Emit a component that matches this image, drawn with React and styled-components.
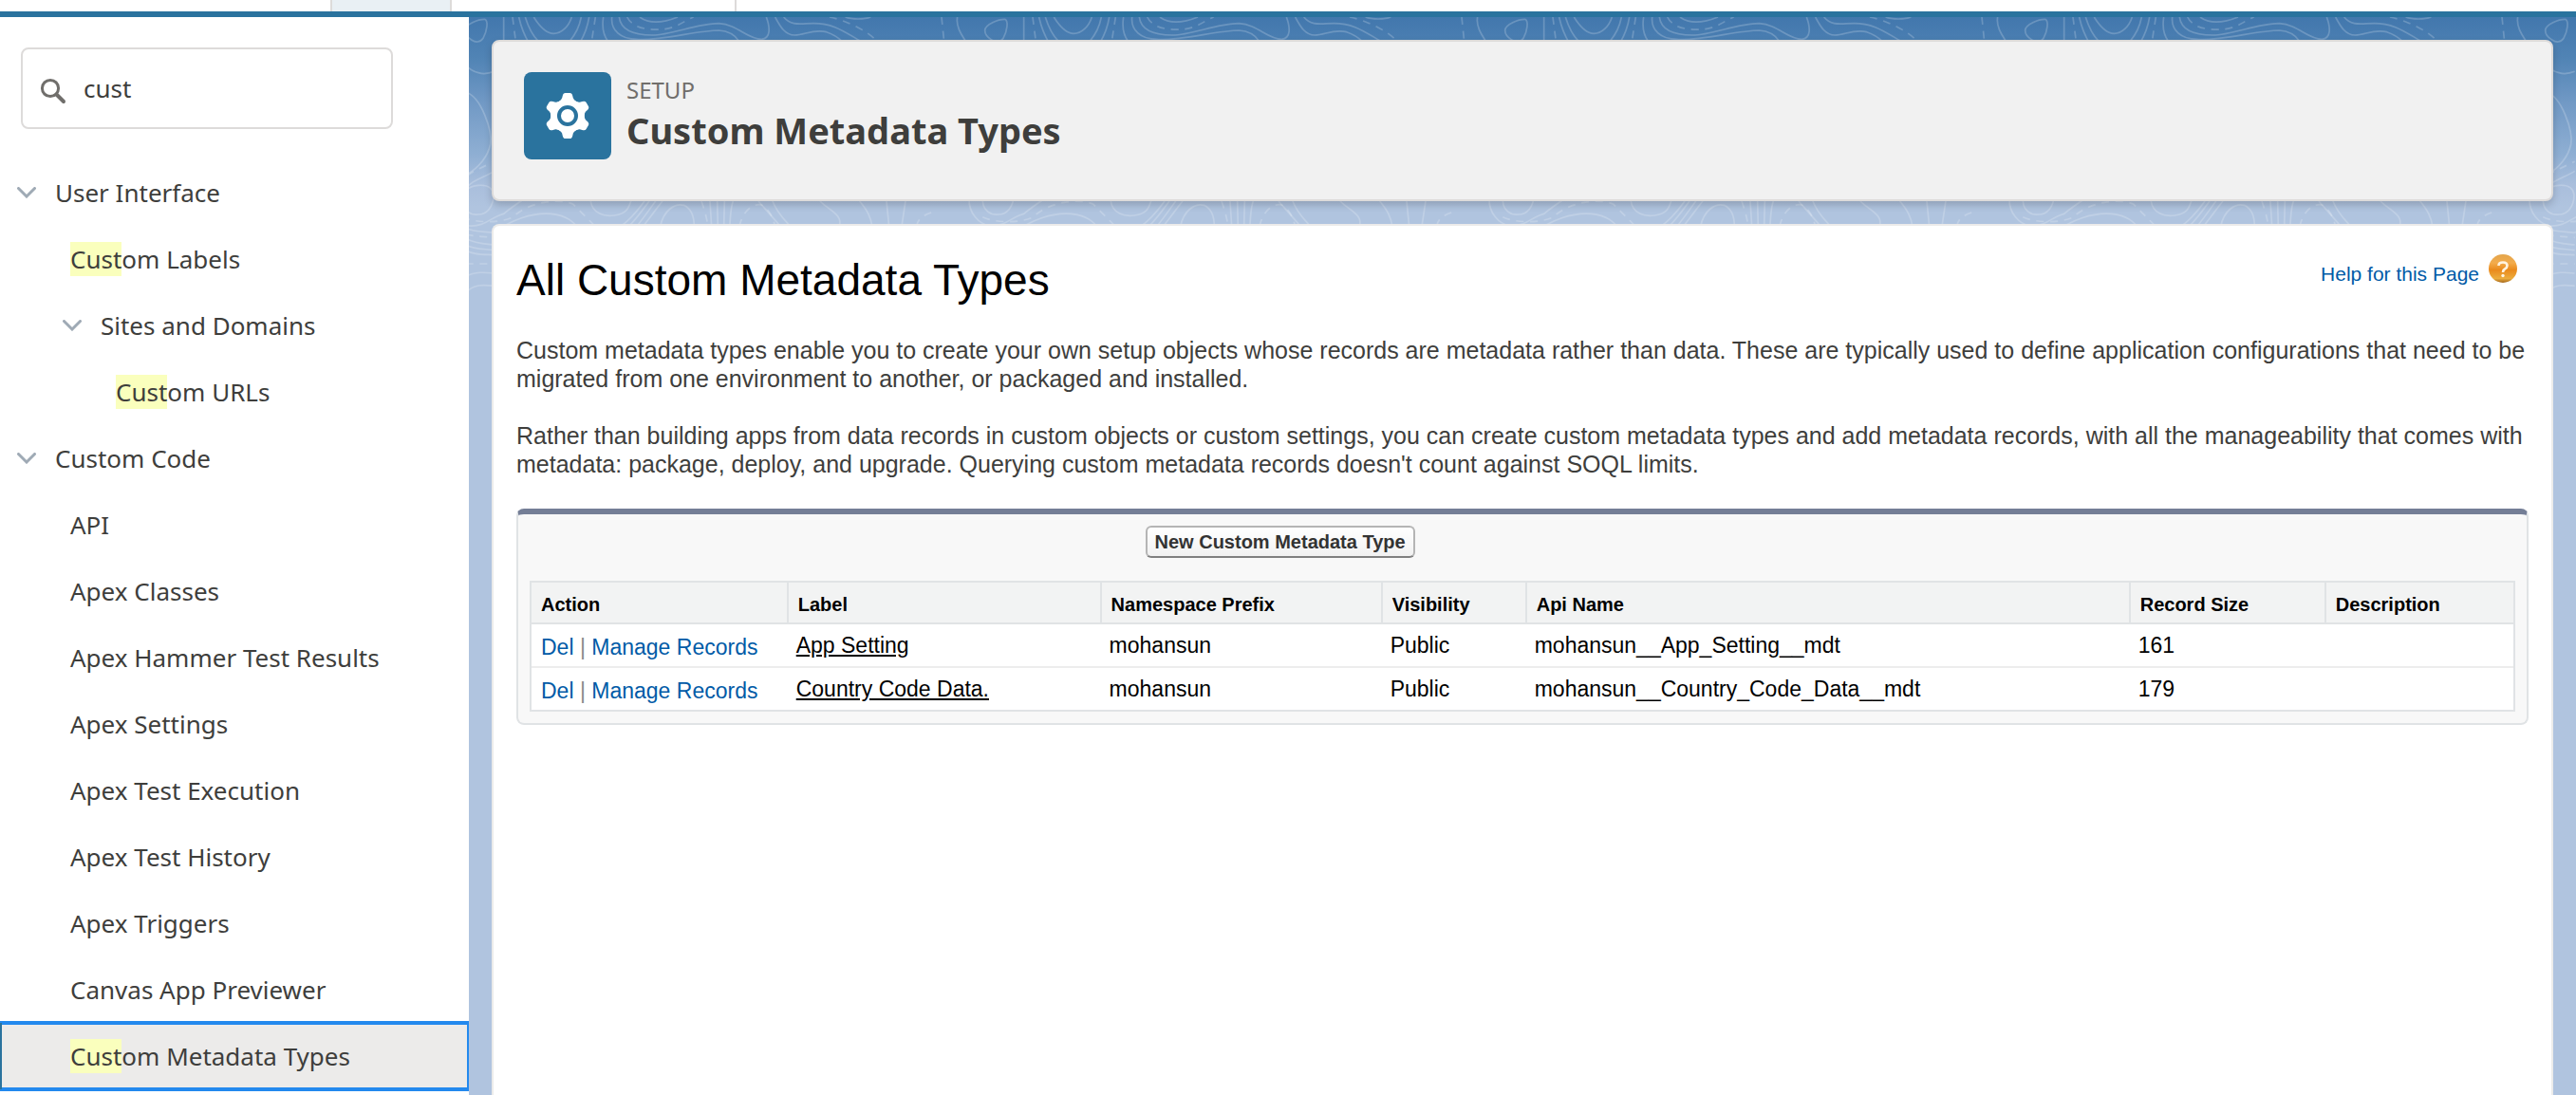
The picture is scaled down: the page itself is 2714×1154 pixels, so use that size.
import React from "react";
import styled, { createGlobalStyle } from "styled-components";

const sans = `"Noto Sans", "Open Sans", sans-serif`;
const arial = `"Liberation Sans", Arial, sans-serif`;

const GlobalStyle = createGlobalStyle`
  *, *::before, *::after { box-sizing: border-box; }
  body { margin: 0; background: #fff; color: #3e3e3c; font-family: ${sans}; }
  h1, h2, p, ul { margin: 0; padding: 0; }
`;

const Page = styled.div`
  display: flex;
  flex-direction: column;
  height: 100vh;
  overflow: hidden;
`;

const TabBar = styled.nav`
  display: flex;
  flex: none;
  height: 18px;
  padding-left: 348px;
  background: #fff;
  border-bottom: 6px solid #2a739e;
`;

const Tab = styled.span`
  width: ${(p) => p.$width}px;
  border-right: 2px solid #dddbda;
  border-left: ${(p) => (p.$active ? "2px solid #dddbda" : "none")};
  background: ${(p) => (p.$active ? "#e9f0f4" : "#fff")};
`;

const Body = styled.div`
  display: flex;
  flex: 1;
  min-height: 0;
`;

const Sidebar = styled.aside`
  flex: none;
  width: 494px;
  padding-top: 32px;
  overflow: hidden;
  background: #fff;
`;

const SearchBox = styled.label`
  display: flex;
  align-items: center;
  gap: 18px;
  height: 86px;
  margin: 0 80px 32px 22px;
  padding-left: 18px;
  border: 2px solid #dddbda;
  border-radius: 8px;
  background: #fff;
`;

const SearchInput = styled.input`
  flex: 1;
  min-width: 0;
  padding: 0;
  border: 0;
  outline: 0;
  background: transparent;
  color: #3e3e3c;
  font: 26px/36px ${sans};
`;

const Tree = styled.ul`
  list-style: none;
`;

const TreeItem = styled.li`
  display: flex;
  align-items: center;
  height: 70px;
  padding-left: ${(p) => p.$indent}px;
  ${(p) =>
    p.$selected &&
    `
    position: relative;
    background: #ecebea;
    border-left: 2px solid #2a739e;
    padding-left: ${p.$indent - 2}px;
    box-shadow: 0 0 0 2px #2389ee, inset 0 2px #2389ee, inset 0 -2px #2389ee, inset -2px 0 #2389ee;
  `}
`;

const Toggle = styled.button`
  display: flex;
  flex: none;
  width: 40px;
  padding: 0;
  border: 0;
  background: none;
`;

const TreeLink = styled.a`
  color: #3e3e3c;
  font-size: 26px;
  line-height: 36px;
  text-decoration: none;
  white-space: nowrap;
`;

const Match = styled.mark`
  background: #faffbd;
  color: inherit;
`;

const Main = styled.main`
  position: relative;
  display: flex;
  flex: 1;
  flex-direction: column;
  gap: 24px;
  min-width: 0;
  padding: 24px 24px 0;
  background: linear-gradient(#4277ad 0, #5184b5 44px, #7199c5 90px, #8fafd3 145px, #a9bedc 176px, #b0c4df 200px);
`;

const Contours = styled.svg`
  position: absolute;
  inset: 0;
  width: 100%;
  height: 320px;
`;

const PageHeader = styled.header`
  position: relative;
  display: flex;
  gap: 16px;
  padding: 32px 32px 42px;
  border: 2px solid #dddbda;
  border-radius: 8px;
  background: #f1f1f1;
  box-shadow: 0 4px 8px rgba(0, 0, 0, 0.18);
`;

const IconTile = styled.span`
  display: flex;
  width: 92px;
  height: 92px;
  border-radius: 8px;
  background: #2a739e;
`;

const HeaderText = styled.div`
  display: flex;
  flex-direction: column;
`;

const Eyebrow = styled.span`
  color: #706e6b;
  font-size: 24px;
  line-height: 38px;
`;

const PageTitle = styled.h1`
  color: #3e3e3c;
  font-size: 38px;
  font-weight: 700;
  line-height: 46px;
`;

const Card = styled.section`
  position: relative;
  flex: 1;
  padding: 30px 24px;
  border: 2px solid #ecebea;
  border-bottom: 0;
  border-radius: 8px 8px 0 0;
  background: #fff;
  font-family: ${arial};
`;

const CardHead = styled.div`
  display: flex;
  justify-content: space-between;
  align-items: flex-start;
  margin-bottom: 32px;
  padding-right: 12px;
`;

const CardTitle = styled.h2`
  color: #000;
  font-size: 46px;
  font-weight: 400;
  line-height: 54px;
`;

const HelpLink = styled.a`
  display: flex;
  align-items: flex-start;
  gap: 10px;
  color: #015ba7;
  font-size: 21px;
  line-height: 42px;
  text-decoration: none;
`;

const Paragraph = styled.p`
  margin-bottom: 30px;
  font-size: 25px;
  line-height: 30px;
`;

const Panel = styled.div`
  margin-top: 32px;
  padding: 12px;
  border: 2px solid #e0e3e5;
  border-top: 6px solid #747e96;
  border-radius: 8px;
  background: #f8f8f8;
`;

const PanelActions = styled.div`
  padding: 0 0 24px 31%;
`;

const ActionButton = styled.button`
  display: block;
  height: 34px;
  padding: 0 8px;
  border: 2px solid #b5b5b5;
  border-bottom-color: #7f7f7f;
  border-radius: 6px;
  background: linear-gradient(#fff, #f1f1f1);
  color: #333;
  font: 700 20px/30px ${arial};
`;

const Table = styled.table`
  width: 100%;
  border: 2px solid #e0e3e5;
  border-spacing: 0;
  background: #fff;
  color: #000;
  table-layout: fixed;
`;

const HeadCell = styled.th`
  width: ${(p) => p.$width};
  height: 44px;
  padding: 4px 10px 0;
  border-bottom: 2px solid #e0e3e5;
  background: #f2f3f3;
  font-size: 20px;
  line-height: 26px;
  text-align: left;
  white-space: nowrap;

  & + & { border-left: 2px solid #e0e3e5; }
`;

const Cell = styled.td`
  height: 44px;
  padding: 0 10px;
  font-size: 23px;
  line-height: 28px;
  white-space: nowrap;

  tr + tr > & { height: 46px; border-top: 2px solid #ededed; }
`;

const ActionCell = styled(Cell)`
  padding-top: 4px;
  color: #888;
`;

const ActionLink = styled.a`
  color: #015ba7;
  text-decoration: none;
`;

const RecordLink = styled.a`
  color: #000;
  text-decoration: underline;
`;

const Chevron = () => (
  <svg width="20" height="12" viewBox="0 0 20 12" fill="none" stroke="#9faab5" strokeWidth="3" strokeLinecap="round">
    <path d="M1.5 1.5 10 10l8.500-8.500" />
  </svg>
);

const SearchIcon = () => (
  <svg width="28" height="34" viewBox="0 -6 28 34" fill="none" stroke="#706e6b">
    <circle cx="11" cy="11" r="8.600" strokeWidth="3" />
    <path d="M17.500 17.500 25 25" strokeWidth="4" strokeLinecap="round" />
  </svg>
);

const GearIcon = () => (
  <svg width="92" height="92" viewBox="0 0 276 276" aria-hidden="true">
    <g fill="#fff">
      {[0, 60, 120, 180, 240, 300].map((a) => (
        <path key={a} transform={`rotate(${a} 138 138)`} d="M104 96Q121 90 122 76Q124 66 131 66H145Q152 66 154 76Q155 90 172 96V120H104Z" />
      ))}
      <circle cx="138" cy="138" r="52" />
    </g>
    <circle cx="138" cy="138" r="27" fill="#fff" stroke="#2a739e" strokeWidth="12" />
  </svg>
);

const HelpIcon = () => (
  <svg width="30" height="30" viewBox="0 0 30 30" aria-hidden="true">
    <defs>
      <linearGradient id="orb" x1="0" y1="0" x2="0" y2="1">
        <stop offset="0" stopColor="#e3a54c" />
        <stop offset=".3" stopColor="#f3ac4c" />
        <stop offset=".55" stopColor="#ea8a1c" />
        <stop offset=".85" stopColor="#ecac3c" />
        <stop offset="1" stopColor="#a4671c" />
      </linearGradient>
    </defs>
    <circle cx="15" cy="15" r="15" fill="url(#orb)" />
    <path d="M10.500 12Q10.500 8.500 15 8.500T19.500 12Q19.500 14 17 15.500Q15 16.500 15 19" fill="none" stroke="#fff4e0" strokeWidth="2.600" />
    <circle cx="15" cy="22.500" r="1.700" fill="#fff4e0" />
  </svg>
);

const solidLines = [
  "M-13 60C-12 40 30 25 50 25C62 30 58 60 45 85C35 100 20 98 8 90C-5 82 -13 72 -13 60Z",
  "M-100 18C-105 45 -90 70 -73 95C-50 130 -10 185 30 194C50 200 65 196 80 190",
  "M110 18V100",
  "M158 18C165 50 175 75 190 100M380 18C375 50 365 75 350 100",
  "M178 18C188 50 200 75 220 95M355 18C350 45 335 75 318 95",
  "M205 18C225 50 245 70 268 70S315 50 325 18",
  "M425 18C420 50 425 75 440 95",
  "M452 18C448 60 480 88 530 88C600 95 720 60 790 60C825 62 845 80 855 95",
  "M475 18C480 60 520 75 580 75C640 75 720 38 790 38C850 42 880 88 925 88C955 85 952 50 940 18",
  "M540 18C570 40 610 38 660 18",
  "M968 18C985 50 1000 75 1030 75C1060 75 1090 55 1130 65C1160 75 1170 85 1180 95",
  "M995 18C1020 48 1050 38 1090 38C1150 38 1180 60 1235 92",
  "M1190 18C1210 26 1250 26 1270 18",
  "M-10 255C40 270 75 380 68 420C60 460 30 495 -5 515",
  "M-20 570C10 530 50 525 80 505",
  "M-63 590C-65 640 -30 672 0 678C50 682 70 650 110 640C170 590 240 560 250 520",
  "M-20 600C-25 570 0 552 30 550C55 548 75 555 78 580C78 620 55 642 30 642C5 645 -18 630 -20 600Z",
  "M80 700C130 660 200 635 260 640C310 645 330 665 350 690",
  "M385 600C390 640 430 650 460 645C500 640 505 620 512 600",
  "M480 680C520 650 540 620 555 600M505 680C535 650 555 620 570 600M530 680C555 650 575 620 590 600M550 680C575 650 595 620 612 600",
  "M605 680C615 630 650 605 680 613C705 625 712 650 712 680",
  "M762 600L767 680M785 600L787 680M808 600L806 680M835 600C825 630 828 650 824 680",
  "M915 600C950 640 960 650 985 680M960 600C975 640 1000 660 1020 685",
  "M1110 600C1140 630 1185 645 1170 680",
  "M1235 600C1260 630 1270 650 1275 680M1320 600L1328 680M1380 600L1368 680",
  "M-10 685C20 700 50 695 80 700M-10 718C20 735 50 735 80 738M-10 738C20 755 50 750 80 755M-10 755C20 772 50 768 80 770",
  "M-10 838C20 822 50 825 80 828M-10 890C15 860 50 865 80 868",
];

const dashedLines = [
  "M-150 18L-142 95",
  "M138 18L148 95",
  "M400 18L388 95",
  "M500 18C520 58 580 60 620 56C660 50 680 30 710 18",
  "M1140 18C1190 28 1260 60 1290 95",
  "M-5 520C20 500 50 490 80 475",
  "M-20 650C20 670 100 670 140 650C190 600 290 590 330 610C350 630 370 650 395 675",
  "M735 600C745 630 752 650 755 680",
  "M855 680C865 630 900 605 925 612C950 625 960 650 968 680",
  "M1415 680C1420 630 1500 632 1570 605",
  "M-10 705C20 712 50 712 80 715M-10 798H80",
];

const ContourPattern = () => (
  <Contours aria-hidden="true">
    <defs>
      <pattern id="contours" x="-60" width="548" height="320" patternUnits="userSpaceOnUse">
        <g transform="translate(60 -6) scale(.33333)" fill="none" stroke="#fff" strokeOpacity=".2" strokeWidth="5">
          {solidLines.map((d) => <path key={d} d={d} />)}
          {dashedLines.map((d) => <path key={d} d={d} strokeDasharray="24 20" />)}
        </g>
      </pattern>
    </defs>
    <rect width="100%" height="100%" fill="url(#contours)" />
  </Contours>
);

const tree = [
  { label: "User Interface", indent: 18, open: true },
  { match: "Cust", label: "om Labels", indent: 74 },
  { label: "Sites and Domains", indent: 66, open: true },
  { match: "Cust", label: "om URLs", indent: 122 },
  { label: "Custom Code", indent: 18, open: true },
  { label: "API", indent: 74 },
  { label: "Apex Classes", indent: 74 },
  { label: "Apex Hammer Test Results", indent: 74 },
  { label: "Apex Settings", indent: 74 },
  { label: "Apex Test Execution", indent: 74 },
  { label: "Apex Test History", indent: 74 },
  { label: "Apex Triggers", indent: 74 },
  { label: "Canvas App Previewer", indent: 74 },
  { match: "Cust", label: "om Metadata Types", indent: 74, selected: true },
];

const columns = [
  ["Action", "12.870%"],
  ["Label", "15.800%"],
  ["Namespace Prefix", "14.180%"],
  ["Visibility", "7.280%"],
  ["Api Name", "30.460%"],
  ["Record Size", "9.870%"],
  ["Description", "auto"],
];

const records = [
  { label: "App Setting", api: "mohansun__App_Setting__mdt", size: 161 },
  { label: "Country Code Data.", api: "mohansun__Country_Code_Data__mdt", size: 179 },
];

export default function App() {
  return (
    <Page>
      <GlobalStyle />
      <TabBar>
        <Tab $width={128} $active />
        <Tab $width={300} />
      </TabBar>
      <Body>
        <Sidebar>
          <SearchBox>
            <SearchIcon />
            <SearchInput type="text" aria-label="Quick Find" defaultValue="cust" />
          </SearchBox>
          <Tree>
            {tree.map((item) => (
              <TreeItem key={item.label} $indent={item.indent} $selected={item.selected}>
                {item.open && (
                  <Toggle type="button" aria-label={`Collapse ${item.label}`}>
                    <Chevron />
                  </Toggle>
                )}
                <TreeLink href="#">
                  {item.match && <Match>{item.match}</Match>}
                  {item.label}
                </TreeLink>
              </TreeItem>
            ))}
          </Tree>
        </Sidebar>
        <Main>
          <ContourPattern />
          <PageHeader>
            <IconTile>
              <GearIcon />
            </IconTile>
            <HeaderText>
              <Eyebrow>SETUP</Eyebrow>
              <PageTitle>Custom Metadata Types</PageTitle>
            </HeaderText>
          </PageHeader>
          <Card>
            <CardHead>
              <CardTitle>All Custom Metadata Types</CardTitle>
              <HelpLink href="#">
                Help for this Page
                <HelpIcon />
              </HelpLink>
            </CardHead>
            <Paragraph>
              Custom metadata types enable you to create your own setup objects whose records are metadata rather than
              data. These are typically used to define application configurations that need to be migrated from one
              environment to another, or packaged and installed.
            </Paragraph>
            <Paragraph>
              Rather than building apps from data records in custom objects or custom settings, you can create custom
              metadata types and add metadata records, with all the manageability that comes with metadata: package,
              deploy, and upgrade. Querying custom metadata records doesn't count against SOQL limits.
            </Paragraph>
            <Panel>
              <PanelActions>
                <ActionButton type="button">New Custom Metadata Type</ActionButton>
              </PanelActions>
              <Table>
                <thead>
                  <tr>
                    {columns.map(([name, width]) => (
                      <HeadCell key={name} scope="col" $width={width}>{name}</HeadCell>
                    ))}
                  </tr>
                </thead>
                <tbody>
                  {records.map((r) => (
                    <tr key={r.label}>
                      <ActionCell>
                        <ActionLink href="#">Del</ActionLink> | <ActionLink href="#">Manage Records</ActionLink>
                      </ActionCell>
                      <Cell><RecordLink href="#">{r.label}</RecordLink></Cell>
                      <Cell>mohansun</Cell>
                      <Cell>Public</Cell>
                      <Cell>{r.api}</Cell>
                      <Cell>{r.size}</Cell>
                      <Cell />
                    </tr>
                  ))}
                </tbody>
              </Table>
            </Panel>
          </Card>
        </Main>
      </Body>
    </Page>
  );
}
